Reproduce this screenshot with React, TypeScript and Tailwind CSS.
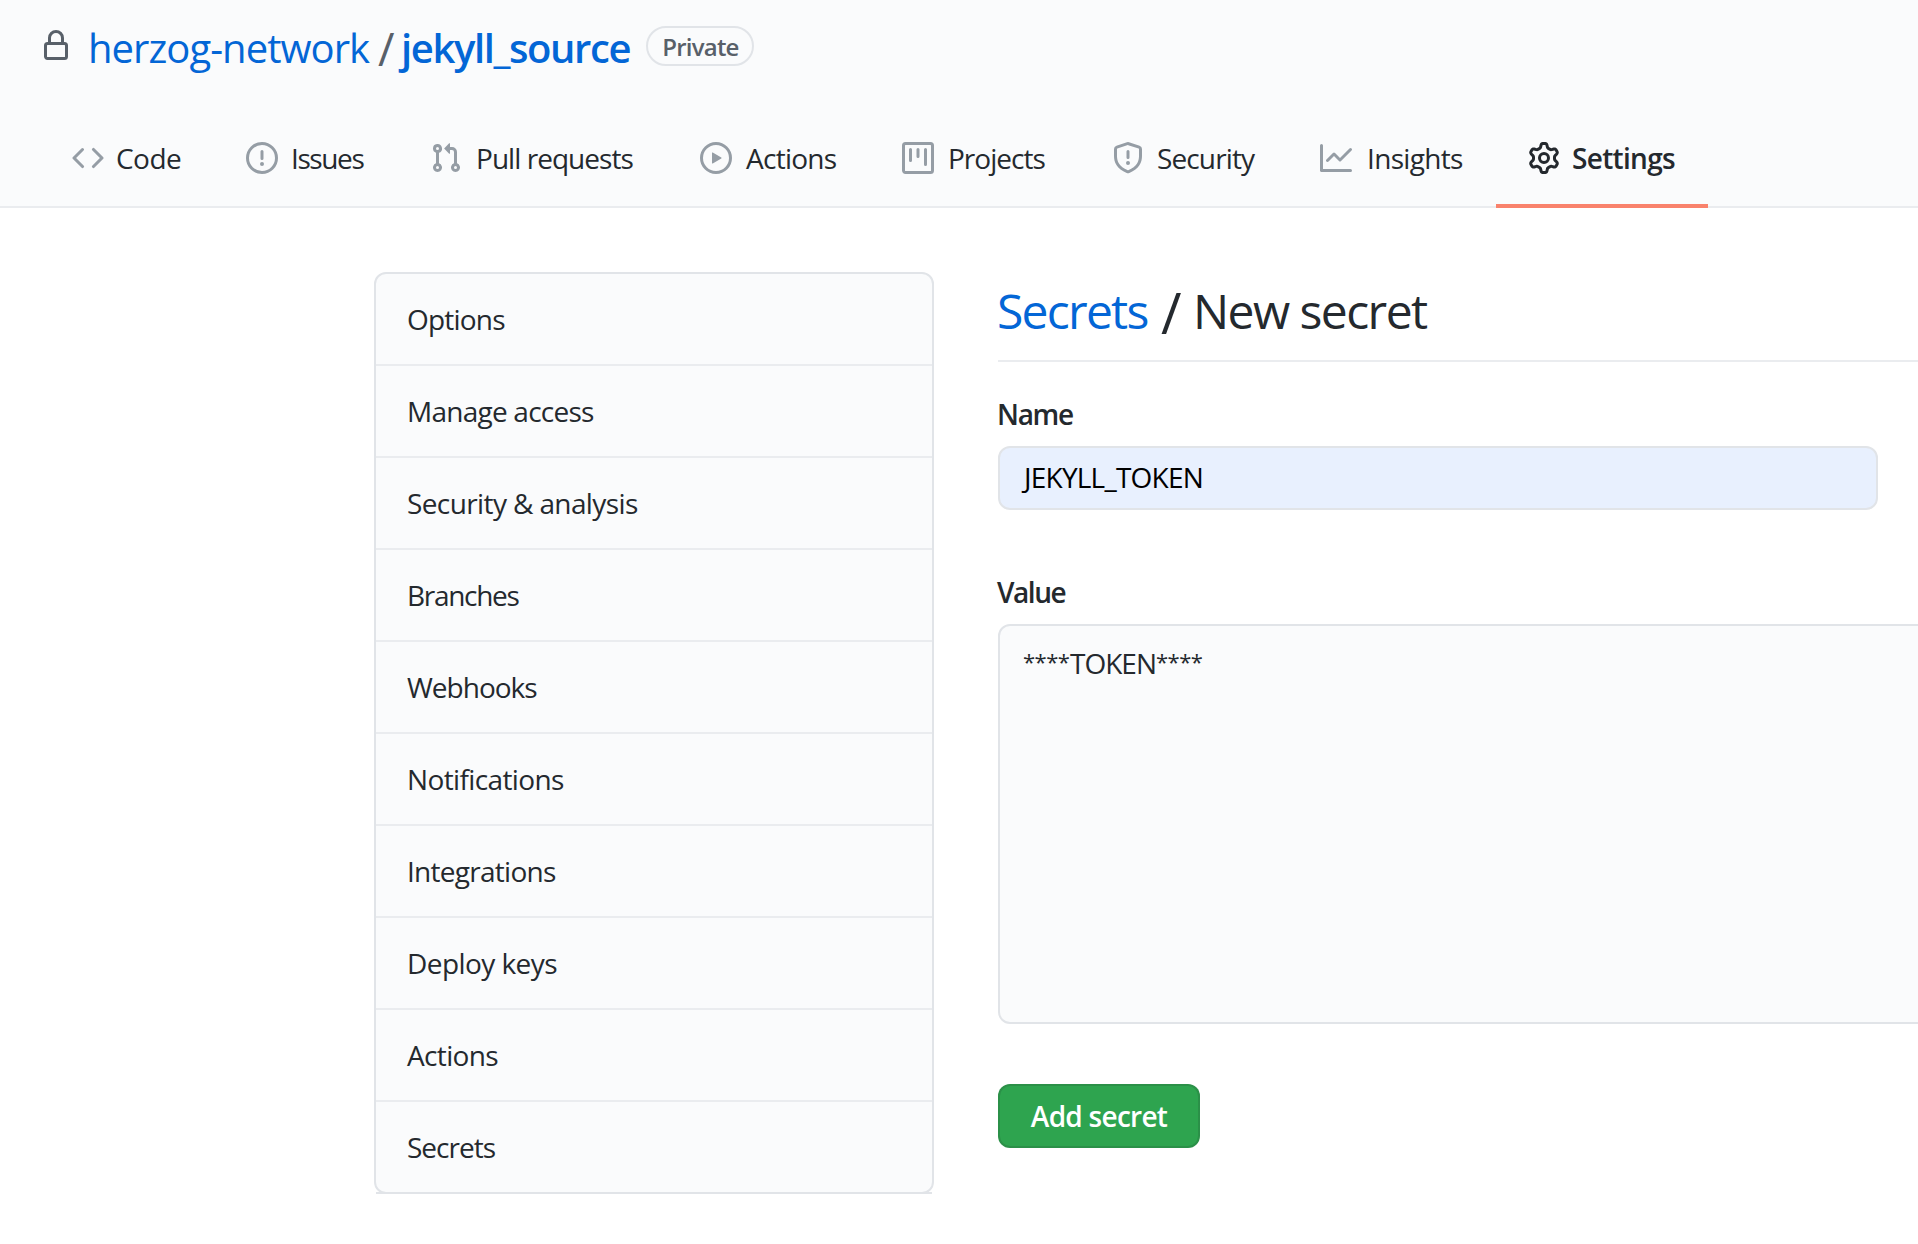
import type { ReactNode } from 'react';

const paths = {
  lock: 'M4 4v2h-.25A1.75 1.75 0 002 7.75v5.5c0 .966.784 1.75 1.75 1.75h8.5A1.75 1.75 0 0014 13.25v-5.5A1.75 1.75 0 0012.25 6H12V4a4 4 0 10-8 0zm6.5 2V4a2.5 2.5 0 10-5 0v2h5zM12 7.5h.25a.25.25 0 01.25.25v5.5a.25.25 0 01-.25.25h-8.5a.25.25 0 01-.25-.25v-5.5a.25.25 0 01.25-.25H12z',
  code: 'M4.72 3.22a.75.75 0 011.06 1.06L2.06 8l3.72 3.72a.75.75 0 11-1.06 1.06L.47 8.53a.75.75 0 010-1.06l4.25-4.25zm6.56 0a.75.75 0 10-1.06 1.06L13.94 8l-3.72 3.72a.75.75 0 101.06 1.06l4.25-4.25a.75.75 0 000-1.06l-4.25-4.25z',
  issue: 'M8 1.5a6.5 6.5 0 100 13 6.5 6.5 0 000-13zM0 8a8 8 0 1116 0A8 8 0 010 8zm9 3a1 1 0 11-2 0 1 1 0 012 0zm-.25-6.25a.75.75 0 00-1.5 0v3.5a.75.75 0 001.5 0v-3.5z',
  pull: 'M7.177 3.073L9.573.677A.25.25 0 0110 .854v4.792a.25.25 0 01-.427.177L7.177 3.427a.25.25 0 010-.354zM3.75 2.5a.75.75 0 100 1.5.75.75 0 000-1.5zm-2.25.75a2.25 2.25 0 113 2.122v5.256a2.251 2.251 0 11-1.5 0V5.372A2.25 2.25 0 011.5 3.25zM11 2.5h-1V4h1a1 1 0 011 1v5.628a2.251 2.251 0 101.5 0V5A2.5 2.5 0 0011 2.5zm1 10.25a.75.75 0 111.5 0 .75.75 0 01-1.5 0zM3.75 12a.75.75 0 100 1.5.75.75 0 000-1.5z',
  play: 'M1.5 8a6.5 6.5 0 1113 0 6.5 6.5 0 01-13 0zM8 0a8 8 0 100 16A8 8 0 008 0zM6.379 5.227A.25.25 0 006 5.442v5.117a.25.25 0 00.379.214l4.264-2.559a.25.25 0 000-.428L6.379 5.227z',
  project: 'M1.75 0A1.75 1.75 0 000 1.75v12.5C0 15.216.784 16 1.75 16h12.5A1.75 1.75 0 0016 14.25V1.75A1.75 1.75 0 0014.25 0H1.75zM1.5 1.75a.25.25 0 01.25-.25h12.5a.25.25 0 01.25.25v12.5a.25.25 0 01-.25.25H1.75a.25.25 0 01-.25-.25V1.75zM11.75 3a.75.75 0 00-.75.75v7.5a.75.75 0 001.5 0v-7.5a.75.75 0 00-.75-.75zm-8.25.75a.75.75 0 011.5 0v5.5a.75.75 0 01-1.5 0v-5.5zM8 3a.75.75 0 00-.75.75v3.5a.75.75 0 001.5 0v-3.5A.75.75 0 008 3z',
  shield: 'M7.467.133a1.75 1.75 0 011.066 0l5.25 1.68A1.75 1.75 0 0115 3.48V7c0 1.566-.32 3.182-1.303 4.682-.983 1.498-2.585 2.813-5.032 3.855a1.7 1.7 0 01-1.33 0c-2.447-1.042-4.049-2.357-5.032-3.855C1.32 10.182 1 8.566 1 7V3.48a1.75 1.75 0 011.217-1.667l5.25-1.68zm.61 1.429a.25.25 0 00-.153 0l-5.25 1.68a.25.25 0 00-.174.238V7c0 1.358.275 2.666 1.057 3.86.784 1.194 2.121 2.34 4.366 3.297a.2.2 0 00.154 0c2.245-.956 3.582-2.104 4.366-3.298C13.225 9.666 13.5 8.36 13.5 7V3.48a.25.25 0 00-.174-.237l-5.25-1.68zM9 10.5a1 1 0 11-2 0 1 1 0 012 0zm-.25-5.75a.75.75 0 10-1.5 0v3a.75.75 0 001.5 0v-3z',
  graph: 'M1.5 1.75a.75.75 0 00-1.5 0v12.5c0 .414.336.75.75.75h14.5a.75.75 0 000-1.5H1.5V1.75zm14.28 2.53a.75.75 0 00-1.06-1.06L10 7.94 7.53 5.47a.75.75 0 00-1.06 0L3.22 8.72a.75.75 0 001.06 1.06L7 7.06l2.47 2.47a.75.75 0 001.06 0l5.25-5.25z',
  gear: 'M7.429 1.525a6.593 6.593 0 011.142 0c.036.003.108.036.137.146l.289 1.105c.147.56.55.967.997 1.189.174.086.341.183.501.29.417.278.97.423 1.53.27l1.102-.303c.11-.03.175.016.195.046.219.31.41.641.573.989.014.031.022.11-.059.19l-.815.806c-.411.406-.562.957-.53 1.456a4.588 4.588 0 010 .582c-.032.499.119 1.05.53 1.456l.815.806c.08.08.073.159.059.19a6.494 6.494 0 01-.573.99c-.02.029-.086.074-.195.045l-1.103-.303c-.559-.153-1.112-.008-1.529.27-.16.107-.327.204-.5.29-.449.222-.851.628-.998 1.189l-.289 1.105c-.029.11-.101.143-.137.146a6.613 6.613 0 01-1.142 0c-.036-.003-.108-.037-.137-.146l-.289-1.105c-.147-.56-.55-.967-.997-1.189a4.502 4.502 0 01-.501-.29c-.417-.278-.97-.423-1.53-.27l-1.102.303c-.11.03-.175-.016-.195-.046a6.492 6.492 0 01-.573-.989c-.014-.031-.022-.11.059-.19l.815-.806c.411-.406.562-.957.53-1.456a4.587 4.587 0 010-.582c.032-.499-.119-1.05-.53-1.456l-.815-.806c-.08-.08-.073-.159-.059-.19a6.44 6.44 0 01.573-.99c.02-.029.086-.075.195-.045l1.103.303c.559.153 1.112.008 1.529-.27.16-.107.327-.204.5-.29.449-.222.851-.628.998-1.189l.289-1.105c.029-.11.101-.143.137-.146zM8 0c-.236 0-.47.01-.701.03-.743.065-1.29.615-1.458 1.261l-.29 1.106c-.017.066-.078.158-.211.224a5.994 5.994 0 00-.668.386c-.123.082-.233.09-.3.071L3.27 2.776c-.644-.177-1.392.02-1.82.63a7.977 7.977 0 00-.704 1.217c-.315.675-.111 1.422.363 1.891l.815.806c.05.048.098.147.088.294a6.084 6.084 0 000 .772c.01.147-.038.246-.088.294l-.815.806c-.474.469-.678 1.216-.363 1.891.2.428.436.835.704 1.218.428.609 1.176.806 1.82.63l1.103-.303c.066-.019.176-.011.299.071.213.143.436.272.668.386.133.066.194.158.212.224l.289 1.106c.169.646.715 1.196 1.458 1.26a8.094 8.094 0 001.402 0c.743-.064 1.29-.614 1.458-1.26l.29-1.106c.017-.066.078-.158.211-.224a5.98 5.98 0 00.668-.386c.123-.082.233-.09.3-.071l1.102.302c.644.177 1.392-.02 1.82-.63.268-.382.505-.789.704-1.217.315-.675.111-1.422-.364-1.891l-.814-.806c-.05-.048-.098-.147-.088-.294a6.1 6.1 0 000-.772c-.01-.147.039-.246.088-.294l.814-.806c.475-.469.679-1.216.364-1.891a7.992 7.992 0 00-.704-1.218c-.428-.609-1.176-.806-1.82-.63l-1.103.303c-.066.019-.176.011-.299-.071a5.991 5.991 0 00-.668-.386c-.133-.066-.194-.158-.212-.224L10.16 1.29C9.99.645 9.444.095 8.701.031A8.094 8.094 0 008 0zm1.5 8a1.5 1.5 0 11-3 0 1.5 1.5 0 013 0zM11 8a3 3 0 11-6 0 3 3 0 016 0z',
};

function Icon({ name, className = '' }: { name: keyof typeof paths; className?: string }) {
  return (
    <svg viewBox="0 0 16 16" fill="currentColor" className={`size-8 shrink-0 ${className}`}>
      <path fillRule="evenodd" d={paths[name]} />
    </svg>
  );
}

const tabs: { icon: keyof typeof paths; label: string; box: string; text: string }[] = [
  { icon: 'code', label: 'Code', box: 'w-[174px]', text: 'tracking-[-0.54px] ml-3' },
  { icon: 'issue', label: 'Issues', box: 'w-[184px]', text: 'tracking-[-1.4px] ml-[13px]' },
  { icon: 'pull', label: 'Pull requests', box: 'w-[270px]', text: 'tracking-[-0.95px] ml-[14px]' },
  { icon: 'play', label: 'Actions', box: 'w-[202px]', text: 'tracking-[-0.74px] ml-[14px]' },
  { icon: 'project', label: 'Projects', box: 'w-[210px]', text: 'tracking-[-0.97px] ml-[14px]' },
  { icon: 'shield', label: 'Security', box: 'w-[208px]', text: 'tracking-[-0.88px] ml-[13px]' },
  { icon: 'graph', label: 'Insights', box: 'w-[208px]', text: 'tracking-[-0.68px] ml-[15px]' },
];

const menu: [string, string][] = [
  ['Options', 'tracking-[-0.8px]'],
  ['Manage access', 'tracking-[-0.76px]'],
  ['Security & analysis', 'tracking-[-0.61px]'],
  ['Branches', 'tracking-[-1.3px]'],
  ['Webhooks', 'tracking-[-1px]'],
  ['Notifications', 'tracking-[-0.62px]'],
  ['Integrations', 'tracking-[-0.72px]'],
  ['Deploy keys', 'tracking-[-0.56px]'],
  ['Actions', 'tracking-[-0.65px]'],
  ['Secrets', 'tracking-[-1px]'],
];

function Stars({ children }: { children: ReactNode }) {
  return <span className="relative -top-1 inline-block w-[47px] text-[22px] tracking-[-0.5px]">{children}</span>;
}

export default function App() {
  return (
    <div className="h-[1244px] w-[1918px] overflow-hidden bg-white font-['Open_Sans','Noto_Sans',sans-serif] text-[28px] leading-[42px] whitespace-nowrap text-[#24292e]">
      <header className="flex h-[208px] flex-col justify-between border-b-2 border-[#eaecef] bg-[#fafbfc]">
        <div className="flex h-[92px] items-center pl-10 text-[40px] leading-[60px]">
          <Icon name="lock" className="text-[#586069]" />
          <a className="ml-4 w-[290px] pt-[3px] tracking-[-0.95px] text-[#0366d6]">herzog-network</a>
          <span className="w-6 pt-1.5 text-[45px] text-[#586069]">/</span>
          <a className="-ml-px w-[245px] pt-[3px] font-semibold tracking-[-1.4px] text-[#0366d6]">jekyll_source</a>
          <span className="flex h-10 w-[108px] items-center justify-center rounded-full border-2 border-[#e1e4e8] pt-0.5 pl-px text-[24px] leading-9 font-semibold tracking-[-0.8px] text-[#586069]">
            Private
          </span>
        </div>
        <nav className="-mb-0.5 flex h-[100px] pl-10">
          {tabs.map((t) => (
            <a key={t.label} className={`flex shrink-0 items-center pl-8 ${t.box}`}>
              <Icon name={t.icon} className="text-[#959da5]" />
              <span className={`pb-px ${t.text}`}>{t.label}</span>
            </a>
          ))}
          <a className="flex w-[212px] shrink-0 items-center border-b-4 border-[#f9826c] pt-1 pl-8 font-semibold tracking-[-0.68px]">
            <Icon name="gear" />
            <span className="ml-3 pb-px">Settings</span>
          </a>
        </nav>
      </header>

      <div className="flex items-start pt-16 pl-[374px]">
        <aside className="relative h-[922px] w-[560px] rounded-xl border-2 border-[#e1e4e8] bg-[#fafbfc]">
          {menu.map(([label, tracking]) => (
            <a key={label} className={`flex h-[92px] items-center border-b-2 border-[#eaecef] pl-[31px] last-of-type:h-[90px] last-of-type:border-b-0 ${tracking}`}>
              {label}
            </a>
          ))}
          <div className="absolute inset-x-0 -bottom-0.5 h-0.5 bg-[#e1e4e8]" />
        </aside>

        <main className="ml-16 w-[920px] shrink-0">
          <h2 className="flex h-[90px] items-center border-b-2 border-[#eaecef] pb-[10px] text-[48px] leading-[72px]">
            <a className="-ml-px w-[164px] tracking-[-1.75px] text-[#0366d6]">Secrets</a>
            <span className="relative top-px w-8 text-[56px]">/</span>
            <span className="tracking-[-1.57px]">New secret</span>
          </h2>
          <label className="mt-[31px] -ml-px block font-semibold tracking-[-1.3px]">Name</label>
          <div className="mt-[11px] flex h-16 w-[880px] items-center rounded-xl border-2 border-[#e1e4e8] bg-[#e8f0fe] pb-0.5 pl-6 tracking-[-0.78px] text-black">
            JEKYLL_TOKEN
          </div>
          <label className="mt-[61px] -ml-px block font-semibold tracking-[-1.45px]">Value</label>
          <div className="mt-[11px] h-[400px] w-[960px] rounded-xl border-2 border-[#e1e4e8] bg-[#fafbfc] pt-4 pl-[23px]">
            <Stars>****</Stars>
            <span className="inline-block w-[86px] tracking-[-1px]">TOKEN</span>
            <Stars>****</Stars>
          </div>
          <button className="mt-[60px] flex h-16 w-[202px] items-center justify-center rounded-xl border-2 border-[#1b1f23]/15 bg-[#2ea44f] font-semibold tracking-[-0.73px] text-white">
            Add secret
          </button>
        </main>
      </div>
    </div>
  );
}
